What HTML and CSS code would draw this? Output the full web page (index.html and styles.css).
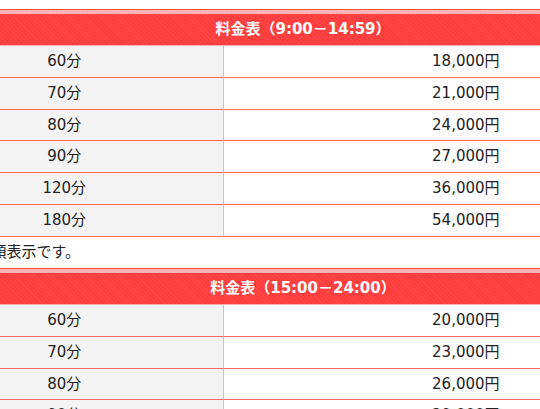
FILE: index.html
```html
<!DOCTYPE html>
<html lang="ja">
<head>
<meta charset="utf-8">
<title>料金表</title>
<link rel="stylesheet" href="styles.css">
</head>
<body>
<div class="page">
  <table class="price">
    <thead>
      <tr><th colspan="2">料金表（9:00－14:59）</th></tr>
    </thead>
    <tbody>
      <tr><td class="min">60分</td><td class="yen">18,000円</td></tr>
      <tr><td class="min">70分</td><td class="yen">21,000円</td></tr>
      <tr><td class="min">80分</td><td class="yen">24,000円</td></tr>
      <tr><td class="min">90分</td><td class="yen">27,000円</td></tr>
      <tr><td class="min">120分</td><td class="yen">36,000円</td></tr>
      <tr><td class="min">180分</td><td class="yen">54,000円</td></tr>
    </tbody>
  </table>
  <p class="note">※税込の総額表示です。</p>
  <table class="price">
    <thead>
      <tr><th colspan="2">料金表（15:00－24:00）</th></tr>
    </thead>
    <tbody>
      <tr><td class="min">60分</td><td class="yen">20,000円</td></tr>
      <tr><td class="min">70分</td><td class="yen">23,000円</td></tr>
      <tr><td class="min">80分</td><td class="yen">26,000円</td></tr>
      <tr><td class="min">90分</td><td class="yen">29,000円</td></tr>
    </tbody>
  </table>
</div>
</body>
</html>
```
FILE: styles.css
```css
html, body {
  margin: 0;
  padding: 0;
  overflow: hidden;
  background: #fff;
}
.page {
  width: 794px;
  margin-left: -94px;
  padding-top: 9px;
  font-family: "DejaVu Sans", "Noto Sans CJK JP", sans-serif;
  font-size: 15px;
  color: #222;
}
.price {
  width: 100%;
  border-collapse: separate;
  border-spacing: 0;
}
.price th {
  border-top: 1px solid #ff4d4d;
  box-shadow: inset 0 4px 0 #ffb4b4;
  border-bottom: 1px solid #ffb0b0;
  padding: 4px 0 0;
  line-height: 31px;
  background: repeating-linear-gradient(45deg, #ff4747 0 1px, #ff3d3d 1px 3px);
  color: #fff;
  font-weight: bold;
  font-size: 15px;
  text-align: center;
}
.price td {
  padding: 5px 0;
  line-height: 20.83px;
  border-bottom: 1px solid #ff6b6b;
  text-align: center;
}
.price td.min {
  width: 40%;
  background: #f4f4f4;
  border-right: 1px solid #ffadad;
}
.price td.yen {
  padding-left: 8px;
}
.note {
  margin: 0;
  padding-left: 13px;
  height: 31px;
  line-height: 31px;
}
```
